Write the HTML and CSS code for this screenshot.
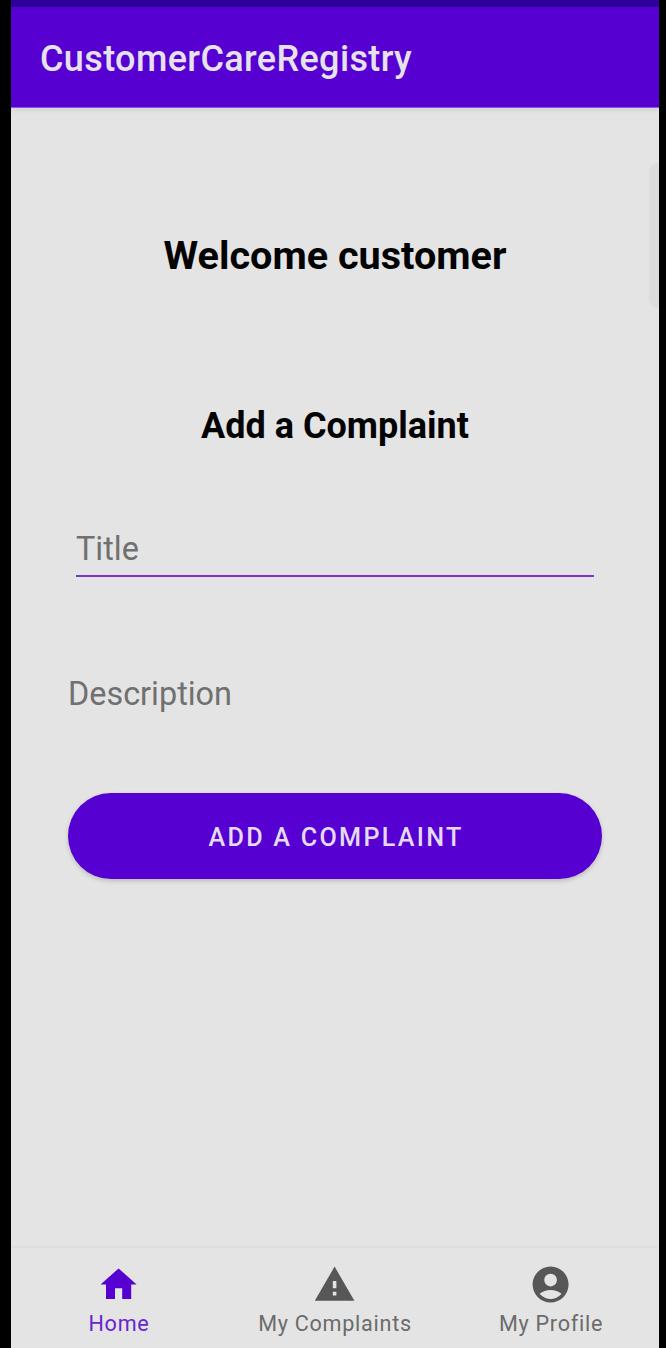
FILE: index.html
```html
<!DOCTYPE html>
<html lang="en">
<head>
<meta charset="utf-8">
<title>CustomerCareRegistry</title>
<link rel="stylesheet" href="styles.css">
</head>
<body>
<div class="screen">
  <div class="status-bar"></div>
  <header class="app-bar"><span class="app-title">CustomerCareRegistry</span></header>
  <main class="content">
    <h1 class="welcome">Welcome customer</h1>
    <h2 class="heading">Add a Complaint</h2>
    <div class="field field-title">Title</div>
    <div class="field field-description">Description</div>
    <button class="submit" type="button">ADD A COMPLAINT</button>
  </main>
  <nav class="bottom-nav">
    <a class="nav-item nav-active">
      <svg class="nav-icon" viewBox="0 0 24 24"><path d="M10 20v-6h4v6h5v-8h3L12 3 2 12h3v8z"/></svg>
      <span class="nav-label">Home</span>
    </a>
    <a class="nav-item">
      <svg class="nav-icon" viewBox="0 0 24 24"><path d="M1 21h22L12 2 1 21zm12-3h-2v-2h2v2zm0-4h-2v-4h2v4z"/></svg>
      <span class="nav-label">My Complaints</span>
    </a>
    <a class="nav-item">
      <svg class="nav-icon" viewBox="0 0 24 24"><path d="M12 2C6.48 2 2 6.48 2 12s4.48 10 10 10 10-4.48 10-10S17.52 2 12 2zm0 4c1.93 0 3.5 1.57 3.5 3.5S13.93 13 12 13s-3.5-1.57-3.5-3.5S10.07 6 12 6zm0 14c-2.03 0-4.43-.82-6.14-2.88C7.55 15.8 9.68 15 12 15s4.45.8 6.14 2.12C16.43 19.18 14.03 20 12 20z"/></svg>
      <span class="nav-label">My Profile</span>
    </a>
  </nav>
  <div class="edge-handle"></div>
</div>
</body>
</html>
```
FILE: styles.css
```css
* { box-sizing: border-box; }

body {
  margin: 0;
  background: #000;
  font-family: Roboto, "Liberation Sans", sans-serif;
}

.screen {
  position: relative;
  display: flex;
  flex-direction: column;
  width: 648px;
  height: 1348px;
  margin-left: 11px;
  background: #e4e4e4;
  overflow: hidden;
}

.status-bar {
  height: 7px;
  background: #2f009b;
}

.app-bar {
  display: flex;
  align-items: center;
  height: 101px;
  padding: 3px 29px 0;
  background: #5600d2;
  border-bottom: 1px solid #8f55e0;
  box-shadow: 0 1px 6px rgba(40, 50, 20, 0.14);
}

.app-title {
  font-size: 36px;
  font-weight: 500;
  line-height: 42px;
  letter-spacing: 0.37px;
  color: #e6e2ec;
}

.content {
  flex: 1;
  display: flex;
  flex-direction: column;
  padding: 125px 57px 0;
}

.welcome {
  margin: 0 0 125px;
  font-size: 39.6px;
  font-weight: 700;
  line-height: 46px;
  text-align: center;
  color: #030303;
}

.heading {
  margin: 0 0 82px;
  font-size: 36px;
  font-weight: 700;
  line-height: 44px;
  text-align: center;
  color: #030303;
}

.field {
  font-size: 32.4px;
  line-height: 38px;
  color: #707070;
}

.field-title {
  height: 47px;
  margin: 0 8px 98px;
  border-bottom: 2px solid #7b35cb;
}

.field-description {
  margin-bottom: 80px;
}

.submit {
  height: 86px;
  padding: 3px 0 0 2px;
  border: 0;
  border-radius: 43px;
  background: #5600d2;
  box-shadow: 0 2px 4px rgba(40, 50, 20, 0.22);
  font-family: inherit;
  font-size: 25.2px;
  font-weight: 500;
  letter-spacing: 2.25px;
  color: #e5daf3;
}

.bottom-nav {
  display: grid;
  grid-template-columns: repeat(3, 1fr);
  height: 100px;
  padding-top: 15px;
  background: #e4e4e4;
  box-shadow: 0 -1px 3px rgba(0, 0, 0, 0.05);
}

.nav-item {
  display: flex;
  flex-direction: column;
  align-items: center;
  color: #6b6b6b;
}

.nav-icon {
  width: 43.2px;
  height: 43.2px;
  fill: #575757;
}

.nav-label {
  margin-top: 5px;
  font-size: 21.6px;
  line-height: 26px;
  letter-spacing: 0.72px;
}

.nav-active { color: #6825d0; }
.nav-active .nav-icon { fill: #5600d2; }

/* Edge panel handle that floats over the right side of the screen */
.edge-handle {
  position: absolute;
  top: 163px;
  right: 0;
  width: 10px;
  height: 145px;
  border-radius: 9px 0 0 9px;
  background: #dcdcdc;
}
```
